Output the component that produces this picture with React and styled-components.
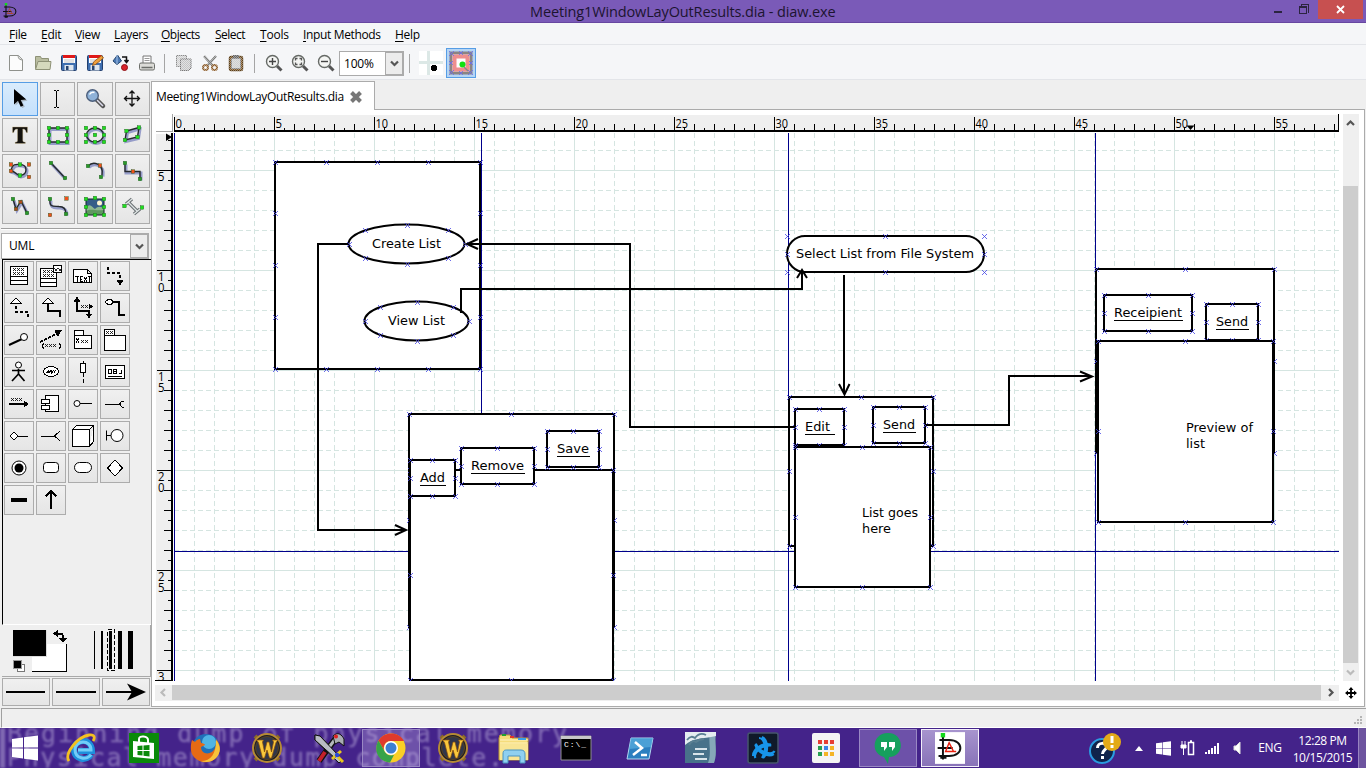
import React from "react";
import styled, { createGlobalStyle } from "styled-components";

const Global = createGlobalStyle`
  * { box-sizing: border-box; }
  body { margin: 0; background: #efefef; }
  svg { display: block; flex: none; }
`;

const ui = `"Open Sans", "Noto Sans", sans-serif`;

const Desktop = styled.div`
  width: 1366px;
  height: 768px;
  overflow: hidden;
  display: flex;
  flex-direction: column;
  background: #efefef;
  font: 12px/16px ${ui};
  color: #000;
`;

/* ---------- title bar ---------- */
const TitleBar = styled.header`
  height: 23px;
  flex: none;
  display: grid;
  grid-template-columns: 530px 306px 1fr;
  background: #7a5ab8;
  border-bottom: 1px solid #6747a1;
`;
const AppMark = styled.div`
  padding: 3px 0 0 2px;
`;
const Title = styled.div`
  font-size: 14.5px;
  line-height: 23px;
  white-space: nowrap;
  letter-spacing: ${(p) => p.$track || 0}px;
  color: #1c1430;
`;
const WindowControls = styled.div`
  display: flex;
  justify-content: flex-end;
  align-items: flex-start;
  padding-right: 3px;
`;
const CloseButton = styled.div`
  width: 45px;
  height: 19px;
  margin-left: 8px;
  display: grid;
  place-items: center;
  background: #c75050;
`;

/* ---------- menu and toolbar ---------- */
const MenuBar = styled.nav`
  height: 22px;
  flex: none;
  display: flex;
  gap: 14px;
  padding: 4px 0 0 9px;
  background: #f5f6f8;
  border-bottom: 1px solid #e3e5e9;
`;
const MenuItem = styled.span`
  width: ${(p) => p.$w}px;
  white-space: nowrap;
  letter-spacing: ${(p) => p.$track}px;
  &::first-letter { text-decoration: underline; text-underline-offset: 2px; }
  display: block;
`;
const ToolBar = styled.div`
  height: 35px;
  flex: none;
  display: flex;
  align-items: center;
  padding: 2px 0 0 6px;
  background: #f5f6f8;
  border-bottom: 1px solid #e3e5e9;
`;
const ToolSlot = styled.div`
  width: ${(p) => p.$w || 26}px;
  display: flex;
  justify-content: ${(p) => (p.$end ? "flex-end" : "center")};
`;
const Separator = styled.i`
  width: 1px;
  height: 19px;
  margin: 0 ${(p) => p.$r}px 0 ${(p) => p.$l}px;
  background: #a5a5a5;
`;
const Combo = styled.div`
  width: ${(p) => p.$w}px;
  height: ${(p) => p.$h}px;
  margin: ${(p) => p.$m || 0};
  display: grid;
  grid-template-columns: 1fr 18px;
  background: #fff;
  border: 1px solid #ababab;
  line-height: ${(p) => p.$h - 2}px;
  padding-left: ${(p) => p.$pad}px;
  letter-spacing: -0.2px;
`;
const ComboArrow = styled.span`
  display: grid;
  place-items: center;
  background: #ececec;
  border: 1px solid #ababab;
`;
const SnapButton = styled.div`
  width: 30px;
  height: 30px;
  margin-left: 3px;
  padding: 2px;
  background: #b5d5f5;
  border: 1px solid #569de5;
`;

/* ---------- body ---------- */
const Body = styled.div`
  height: 628px;
  flex: none;
  display: flex;
`;
const SidePanel = styled.aside`
  width: 151px;
  flex: none;
  display: flex;
  flex-direction: column;
`;
const ToolGrid = styled.div`
  display: grid;
  grid-template-columns: 36px 35px 36px 35px;
  grid-auto-rows: 34px;
  gap: 2px;
  padding: 2px 0 3px 2px;
`;
const ToolButton = styled.div`
  display: grid;
  place-items: center;
  border: 1px solid ${(p) => (p.$on ? "#569de5" : "#acacac")};
  background: ${(p) => (p.$on ? "linear-gradient(#daecfc, #c4e0fc)" : "linear-gradient(#f0f0f0, #e5e5e5)")};
`;
const Rule = styled.div`
  height: 2px;
  margin: ${(p) => p.$m || 0};
  background: #fff;
  border-top: 1px solid #a0a0a0;
`;
const SheetBox = styled.div`
  height: 366px;
  margin-left: 2px;
  border: solid #000;
  border-width: 1px 0 0 1px;
  border-bottom: 1px solid #fff;
  padding: 1px;
  display: grid;
  grid-template-columns: repeat(4, 30px);
  grid-auto-rows: 30px;
  gap: 2px;
`;
const ColorArea = styled.div`
  height: 52px;
  display: flex;
  border: solid #a9a9a9;
  border-width: 0 1px 1px 0;
  margin-left: 2px;
  padding: 4px 0 0 9px;
  gap: 24px;
`;
const LineButtons = styled.div`
  display: grid;
  grid-template-columns: repeat(3, 48px);
  grid-auto-rows: 28px;
  gap: 2px;
  padding: 1px 0 0 2px;
`;

const Notebook = styled.main`
  width: 1214px;
  flex: none;
  display: flex;
  flex-direction: column;
  padding-top: 1px;
`;
const Tab = styled.div`
  width: 224px;
  height: 29px;
  flex: none;
  position: relative;
  margin-bottom: -1px;
  display: flex;
  align-items: center;
  gap: 6px;
  padding: 2px 0 0 4px;
  background: #fff;
  border: 1px solid #ababab;
  border-bottom: 0;
`;
const TabName = styled.span`
  width: 187px;
  white-space: nowrap;
  letter-spacing: -0.33px;
`;
const Page = styled.div`
  height: 598px;
  display: grid;
  grid-template-columns: 19px 1165px 20px;
  grid-template-rows: 19px 548px 20px;
  padding: 4px 0 0 3px;
  background: #fff;
  border: 1px solid #ababab;
`;
const Vertical = styled.div`
  grid-column: 3;
  grid-row: 1 / span 2;
  width: 16px;
  margin-left: 4px;
  display: flex;
  flex-direction: column;
  align-items: flex-start;
  background: #efefef;
`;
const TrackGap = styled.div`
  height: 54px;
`;
const Horizontal = styled.div`
  grid-column: 1 / span 2;
  grid-row: 3;
  height: 16px;
  margin-top: 4px;
  display: flex;
  align-items: flex-start;
  background: #efefef;
`;
const Thumb = styled.div`
  width: ${(p) => p.$w}px;
  height: ${(p) => p.$h}px;
  background: #cdcdcd;
`;
const ScrollEnd = styled.span`
  width: ${(p) => p.$w || 15}px;
  height: ${(p) => p.$h || 15}px;
  display: grid;
  place-items: center;
`;
const NavCorner = styled.div`
  grid-column: 3;
  grid-row: 3;
  padding: 6px 0 0 6px;
`;
const StatusBar = styled.footer`
  height: 20px;
  flex: none;
  margin-left: 1px;
  display: flex;
  justify-content: flex-end;
  align-items: flex-end;
  padding: 0 4px 3px 0;
  border: solid #a0a0a0;
  border-width: 1px 0 0 1px;
  border-bottom: 1px solid #fff;
`;

/* ---------- taskbar ---------- */
const TaskBar = styled.div`
  position: relative;
  height: 40px;
  flex: none;
  display: flex;
  background: #44238a;
  overflow: hidden;
`;
const Wallpaper = styled.div`
  position: absolute;
  inset: 0;
  opacity: 0.42;
  filter: blur(0.8px);
`;
const TaskItem = styled.div`
  position: relative;
  width: ${(p) => p.$w || 62}px;
  height: 40px;
  display: grid;
  place-items: center;
`;
const TaskFrame = styled.div`
  width: 58px;
  height: 38px;
  display: grid;
  place-items: center;
  background: ${(p) => (p.$on ? "linear-gradient(#a794ce, #8873b8)" : "rgba(190,170,230,.34)")};
  border: 1px solid ${(p) => (p.$on ? "#f3effa" : "#9a88c4")};
`;
const Tray = styled.div`
  margin-left: auto;
  position: relative;
  display: flex;
  align-items: center;
  color: #fff;
`;
const TrayItem = styled.div`
  width: ${(p) => p.$w}px;
  display: flex;
  justify-content: center;
  white-space: nowrap;
  letter-spacing: -0.35px;
`;
const Clock = styled.div`
  width: 71px;
  text-align: center;
  white-space: nowrap;
  letter-spacing: -0.4px;
  line-height: 17px;
  padding-top: 1px;
`;
const ShowDesktop = styled.div`
  width: 8px;
  height: 40px;
  background: #6d549f;
  border-left: 1px solid #9885c0;
`;

const Svg = ({ w = 24, h = w, vb, crisp, children }) => (
  <svg width={w} height={h} viewBox={vb || `0 0 ${w} ${h}`} fill="none" shapeRendering={crisp ? "crispEdges" : undefined}>
    {children}
  </svg>
);

const Chevron = ({ dir = "down", c = "#555" }) => {
  const d = { down: "M2 3.5L5.5 7 9 3.5", up: "M2 7L5.5 3.5 9 7", left: "M7 2L3.5 5.5 7 9", right: "M4 2l3.5 3.5L4 9" }[dir];
  return <Svg w={11}><path d={d} stroke={c} strokeWidth="2.2" /></Svg>;
};

/* ---------- toolbar icons ---------- */
const Floppy = ({ pen }) => (
  <Svg w={18}>
    <rect x="1.5" y="1.5" width="15" height="15" rx="1" fill="#3f6fb0" stroke="#23406f" />
    <path d="M3 1h12v8H3z" fill="#fff" /><path d="M3 1h12v3H3z" fill="#e01818" />
    <path d="M4 6h10M4 8h10" stroke="#c5c5c5" />
    <path d="M4.500 11h9v5.500h-9z" fill="#dfe6ee" /><path d="M6 12h2.500v4H6z" fill="#27446f" />
    {pen && <path d="M6.500 11.500l1-3.500 8-6.500 2 2.500-8 6.500z" fill="#f0a03c" stroke="#8a4e12" strokeWidth=".8" />}
  </Svg>
);
const Magnifier = ({ kind }) => (
  <Svg w={18}>
    <path d="M12 12l4.500 4.500" stroke="#555" strokeWidth="3" />
    <circle cx="7.500" cy="7.500" r="6" fill="#f4f5f3" stroke="#666a66" strokeWidth="1.400" />
    {kind === "fit" ? <path d="M4.500 6.500v-2h2M8.500 4.500h2v2M10.500 8.500v2h-2M6.500 10.500h-2v-2" stroke="#555" strokeWidth="1.300" /> : <path d={kind === "in" ? "M4 7.500h7M7.500 4v7" : "M4 7.500h7"} stroke="#444" strokeWidth="1.400" />}
  </Svg>
);
const FileIcons = [
  <Svg w={18}><path d="M2.500 1.500h9l4 4v11h-13z" fill="#fcfcfc" stroke="#8f918c" /><path d="M11 1.500c.5 2 0 4 4.500 4.500" stroke="#8f918c" fill="#e4e4e4" /></Svg>,
  <Svg w={18}><path d="M1.500 14.500v-12h5l1 2h7v10z" fill="#b9bda0" stroke="#8d9176" /><path d="M1.500 15.500l2.500-8h13l-1 8z" fill="#d5d9bd" stroke="#8d9176" /></Svg>,
  <Floppy />,
  <Floppy pen />,
  <Svg w={18}><path d="M1 7l4.500-6 4 6-4.500 3.500z" fill="#4a78b4" stroke="#27486f" /><path d="M5 1v9" stroke="#a8c4e6" /><path d="M10 3h4.500v5M12.500 6l2 2.500 2-2.500" stroke="#111" strokeWidth="1.500" /><circle cx="12.500" cy="13.500" r="3" fill="#d8222a" stroke="#8f1015" /></Svg>,
  <Svg w={18}><path d="M5 9V2h8v7" fill="#fff" stroke="#777" /><path d="M6.500 4.500h5M6.500 6.500h5" stroke="#999" /><rect x="1.500" y="9" width="15" height="7" rx="1.500" fill="#dcdcd8" stroke="#6b6d69" /><path d="M3.500 13.500h11" stroke="#6b6d69" strokeWidth="1.500" /></Svg>,
];
const EditIcons = [
  <Svg w={18}><defs><pattern id="dim" width="2" height="2" patternUnits="userSpaceOnUse"><path d="M0 0h1v1H0zM1 1h1v1H1z" fill="#f5f6f8" /></pattern></defs><path d="M1.500 1.500h10v11h-10z" fill="#d0d0d0" stroke="#8a8a8a" /><path d="M5.500 5h10.500v9l-2.500 2.500h-8z" fill="#c4c4c4" stroke="#777" /><path d="M0 0h18v18H0z" fill="url(#dim)" opacity=".6" /></Svg>,
  <Svg w={18}><path d="M3 2l9 10M15 2L6 12" stroke="#7c7c7a" strokeWidth="2.500" /><circle cx="4.500" cy="13.500" r="2.500" stroke="#8f5f2c" strokeWidth="2" /><circle cx="13.500" cy="13.500" r="2.500" stroke="#8f5f2c" strokeWidth="2" /><path d="M0 0h18v18H0z" fill="url(#dim)" opacity=".45" /></Svg>,
  <Svg w={18}><rect x="2.500" y="2.500" width="13" height="14" rx="1.500" fill="#8a6230" stroke="#5d3f16" strokeWidth="1.500" /><path d="M4.500 4.500h9v10h-9z" fill="#cfcfcf" stroke="#888" /><path d="M6 1h6v3H6z" fill="#666" /><path d="M0 0h18v18H0z" fill="url(#dim)" opacity=".4" /></Svg>,
];

/* ---------- drawing tool icons ---------- */
const Handles = ({ pts, c = "#1ee01e" }) => pts.map(([x, y], i) => <rect key={i} x={x - 1.75} y={y - 1.75} width="3.500" height="3.500" fill={c} stroke="#245a24" strokeWidth=".4" />);
const Shape = ({ d }) => (
  <>
    <path d={d} stroke="#6a74b8" strokeWidth="3" opacity=".65" transform="translate(1 1.500)" style={{ filter: "blur(.7px)" }} />
    <path d={d} stroke="#25292d" strokeWidth="1.400" />
  </>
);
const box8 = [[3, 5], [12, 5], [21, 5], [3, 12], [21, 12], [3, 19], [12, 19], [21, 19]];
const R = "#f0501a";
const toolIcons = [
  <><path d="M6 2.500V17l4-3.500 2.700 6 2.600-1.200L12.700 13l5.300-.7z" fill="#888" opacity=".5" transform="translate(1.500 1.500)" /><path d="M6 2v15.500l4-3.700 2.700 6 2.600-1.300L12.700 13l5.600-.4z" fill="#000" /></>,
  <path d="M8 3.500h2M11 3.500h2M10.500 4v16M8 20.500h2M11 20.500h2" stroke="#000" />,
  <><path d="M14 13l6 6" stroke="#555" strokeWidth="4.500" strokeLinecap="round" /><path d="M14 13l6 6" stroke="#dde" strokeWidth="1.500" /><circle cx="9.500" cy="8.500" r="5.800" fill="#8fb2d8" stroke="#4c5f7c" strokeWidth="1.400" /><path d="M6.500 7.500c1-2 3-2.500 5-2" stroke="#fff" strokeWidth="1.500" /></>,
  <path d="M11 4.500v14M4 11.500h14M8.500 6.500L11 4l2.500 2.500M8.500 16.500L11 19l2.500-2.500M6 9l-2.500 2.500L6 14M16 9l2.500 2.500L16 14" stroke="#111" strokeWidth="1.300" />,
  <path d="M4.500 4h15v5.500h-1.300c-.5-2.500-1.200-3.500-3.400-3.500V17.500c0 1.200.8 1.600 2.500 1.600v1.400H7.200v-1.400c1.700 0 2.300-.4 2.300-1.600V6C7 6 6.300 7 5.800 9.500H4.500z" fill="#14120e" stroke="#c9b98c" strokeWidth=".4" />,
  <><Shape d="M3 5h18v14H3z" /><Handles pts={box8} /></>,
  <><Shape d="M3.500 12a8.500 7 0 1 0 17 0a8.500 7 0 1 0-17 0z" /><Handles pts={[...box8, [12, 12]]} /></>,
  <><Shape d="M5.500 8L18 4.500 16.500 14 4 17z" /><Handles pts={[[5.500, 8], [18, 4.500], [16.500, 14], [4, 17]]} /></>,
  <><Shape d="M3 12C4 5 8 5 12 5.500c8 0 8 10 0 11C8 16 8 12.500 3 12z" /><Handles pts={[[12, 5.500], [12, 16.500]]} /><Handles c={R} pts={[[3, 5.500], [21, 5.500], [3, 12], [21, 18]]} /></>,
  <><Shape d="M5 4l14 15" /><Handles c="#2a9a2a" pts={[[5, 4], [19, 19]]} /></>,
  <><Shape d="M5 7c5-5 16-3 14 9" /><Handles c="#2a9a2a" pts={[[5, 7], [18, 18]]} /><Handles c={R} pts={[[17, 6.500]]} /></>,
  <><Shape d="M4 4v8.500h15V20" /><Handles c="#2a9a2a" pts={[[4, 4], [19, 20]]} /><Handles c={R} pts={[[12, 12.500]]} /></>,
  <><Shape d="M5 4l3 10 5-8 6 12" /><Handles c="#2a9a2a" pts={[[5, 4], [19, 18]]} /><Handles c="#b04a1a" pts={[[8, 14], [12.500, 7]]} /></>,
  <><Shape d="M4 4c-1 9 4 7 9 7.500 5 0 7 3 7 7.500" /><Handles c="#2a9a2a" pts={[[4, 4], [20, 19]]} /><Handles c={R} pts={[[20.500, 3.500], [4, 20]]} /></>,
  <><path d="M3 4h18v16H3z" fill="#365e88" /><circle cx="16.500" cy="8" r="2.500" fill="#fff6cf" /><path d="M3 13c4-6 6-1 9 1 3-3 6-3 9 0v6H3z" fill="#8fb890" /><path d="M3 16c5-3 8 0 18-1v5H3z" fill="#5f9860" /><path d="M3 4h18v16H3z" stroke="#18222e" /><Handles pts={[[3, 4], [12, 3], [21, 4], [3, 12], [21, 12], [3, 20], [12, 20], [21, 20]]} /></>,
  <><path d="M7 7l9 9M5 9l6-5M13 19l6-5" stroke="#6c7275" strokeWidth="3.500" /><path d="M7 7l9 9M5 9l6-5M13 19l6-5" stroke="#e0e6e6" strokeWidth="1.300" /><Handles pts={[[3.500, 11], [21, 12.500]]} /></>,
];

/* ---------- UML sheet icons ---------- */
const Xs = ({ x, y, n = 3 }) => <path d={Array.from({ length: n }, (_, i) => `M${x + i * 4} ${y}l3 3M${x + i * 4 + 3} ${y}l-3 3`).join("")} stroke="#111" strokeWidth=".9" />;
const L = ({ d, w = 1, f = "none", dash }) => <path d={d} stroke="#000" strokeWidth={w} fill={f} strokeDasharray={dash} />;
const umlIcons = [
  <><L f="#fff" d="M2.500 1.500h17v18h-17zM2.500 11.500h17M2.500 15.500h17" /><Xs x={5} y={3} /><Xs x={5} y={7} /></>,
  <><L f="#fff" d="M.5 3.500h16v18H.5zM.5 13.500h16M.5 17.500h16" /><Xs x={3} y={5} /><Xs x={3} y={9} /><L f="#fff" d="M13.500.5h8v7h-8z" /><Xs x={14} y={2.500} n={2} /></>,
  <><L f="#fff" d="M1.500 4.500h14l4 4v9h-18zM15.500 4.500v4h4" /><L d="M3 11.500h4M5 12v5M8 17v-5.500h3M8 14.500h2M8 16.500h3M12 12l3 5M15 12l-3 5M16 11.500h4M17.500 12v5" /></>,
  <><L w={2} dash="3 2" d="M4 2v6h12v6" /><L f="#000" d="M13 15h6l-3 5z" /></>,
  <><L w={2} dash="3 2" d="M8 9v6h12v6" /><L f="#fff" d="M2.500 6.500h11L8 1z" /></>,
  <><L w={2} d="M8 7v7h12v6" /><L f="#fff" d="M2.500 6.500h11L8 1z" /></>,
  <><L w={2} d="M5 3v11h12v5M5 14h12" /><L f="#000" d="M2.500 4h5L5 .5zM14.500 17.500h5l-2.500 3z" /><Xs x={9} y={8} n={2} /><L f="#000" d="M17 7v5l3-2.500z" /></>,
  <><L w={2} d="M8 5h7v13h6" /><L f="#fff" d="M1 5l3-2.500h3L9.500 5 7 7.500H4z" /></>,
  <><L w={2} d="M1 16l13-6" /><circle cx="16" cy="8" r="3.500" fill="#fff" stroke="#000" /></>,
  <><L w={1.500} dash="3 1.500" d="M0 13L18 4" /><L f="#000" d="M15 2l6-.5-3 5z" /><L d="M4 14l-2 3 2 3M19 14l2 3-2 3" /><Xs x={5} y={15} /></>,
  <><L f="#fff" d="M2.500 6.500h17v13h-17zM2.500 1.500h9v5h-9z" /><L d="M4 9l3 5M7 9l-3 5" /><Xs x={9} y={11} n={2} /></>,
  <><L f="#fff" d="M.5 6.500h21v15H.5zM.5.500h10v6H.5z" /><Xs x={2} y={2} n={2} /></>,
  <><circle cx="10.500" cy="4" r="3" fill="#fff" stroke="#000" /><L w={1.700} d="M4 9.500h13M10.500 8v5L4 20M10.500 13l6 7" /></>,
  <><ellipse cx="11" cy="10.500" rx="7.500" ry="5" fill="#fff" stroke="#000" /><path d="M6.500 12l2-2.500.5 2.500 2-3 .5 3 2.500-3M14 12l1.500-3" stroke="#000" /></>,
  <><L f="#fff" d="M8.500 2.500h5v9h-5z" /><L d="M11 0v2" /><L dash="4 2" d="M11 12v10" /></>,
  <><L f="#fff" d="M1.500 4.500h19v13h-19z" /><L d="M4.500 8.500h3v4h-3zM9.500 12.500v-4h3v4zM9.500 10.500h3M15 12.500h2.500v-4M4 15.500h14" /></>,
  <><Xs x={3} y={5} /><L w={2} d="M1 11h16" /><L f="#000" d="M16 8.500l4 2.500-4 3z" /></>,
  <><L f="#fff" d="M5.500 2.500h13v16h-13z" /><L f="#fff" d="M1.500 6.500h8v4h-8zM1.500 12.500h8v4h-8z" /></>,
  <><circle cx="5" cy="10.500" r="3" fill="#fff" stroke="#000" /><L d="M8 10.500h12" /></>,
  <><L d="M1 11h14M20 8h-2l-2.500 3 2.500 3h2" /></>,
  <><L f="#fff" d="M2 11l4-4 4 4-4 4z" /><L d="M10 11h10" /></>,
  <><L d="M1 11h13M20 6l-5.500 5 5.500 5" /></>,
  <><L f="#fff" d="M.5 4.500h17v17H.5zM.5 4.500l4-4h17l-4 4M21.500.500v16l-4 5" /></>,
  <><circle cx="13" cy="10.500" r="6" fill="#fff" stroke="#000" /><L d="M2.500 5.500v10M3 10.500h4" /></>,
  <><circle cx="11" cy="11" r="7" fill="#fff" stroke="#000" /><circle cx="11" cy="11" r="4.500" fill="#000" /></>,
  <rect x="3.500" y="5.500" width="15" height="10" rx="3" fill="#fff" stroke="#000" />,
  <rect x="2.500" y="5.500" width="17" height="10" rx="5" fill="#fff" stroke="#000" />,
  <L f="#fff" d="M11 3l7.500 8-7.500 8-7.500-8z" />,
  <L w={4} d="M3 11h16" />,
  <L w={1.500} d="M11 20V2M5.500 7.500L11 2l5.500 5.500" />,
];

/* ---------- rulers ---------- */
const HRuler = () => {
  const ticks = [];
  for (let i = 0; i <= 116; i++) {
    const h = i % 10 === 0 ? 14 : i % 2 === 0 ? 7 : 3;
    ticks.push(<path key={i} d={`M${174.5 + i * 10} 131v-${h}`} stroke="#000" />);
  }
  return (
    <svg width="1165" height="19" viewBox="174 114 1165 19" fontFamily={ui} fontSize="12">
      <path d="M174 115h1165v16H174z" fill="#efefef" />
      {ticks}
      <path d="M174 131h1165" stroke="#000" strokeWidth="2" />
      <path d="M1338.500 114v18" stroke="#000" />
      {Array.from({ length: 12 }, (_, i) => (
        <text key={i} x={175.5 + i * 100} y="128" textLength={i < 2 ? 6.5 : 12.5} lengthAdjust="spacingAndGlyphs">{i * 5}</text>
      ))}
      <path d="M1186.500 125.500h8L1190.500 130z" fill="#000" />
    </svg>
  );
};
const VRuler = () => {
  const ticks = [];
  for (let y = 140; y < 681; y += 10) {
    const w = (y - 170) % 100 === 0 ? 15 : (y - 170) % 20 === 0 ? 8 : 4;
    ticks.push(<path key={y} d={`M172 ${y + 0.5}h-${w}`} stroke="#000" />);
  }
  const labels = ["5", "10", "15", "20", "25", "3"];
  return (
    <svg width="19" height="548" viewBox="155 133 19 548" fontFamily={ui} fontSize="12">
      <path d="M156 134h16v547h-16z" fill="#efefef" />
      {ticks}
      <path d="M172 133v548" stroke="#000" strokeWidth="2" />
      <path d="M155 680.500h18" stroke="#000" />
      {labels.map((l, i) => [...l].map((ch, k) => (
        <text key={`${i}-${k}`} x="158" y={181 + i * 100 + k * 11} textLength="6.500" lengthAdjust="spacingAndGlyphs">{ch}</text>
      )))}
      <path d="M166 133.500l6 3.500-6 4z" fill="#000" />
    </svg>
  );
};

/* ---------- diagram ---------- */
const Mark = ({ x, y }) => <path d={`M${x - 2} ${y - 2}l5 5M${x + 3} ${y - 2}l-5 5`} stroke="#4545e6" strokeWidth=".8" />;
const Node = ({ x1, y1, x2, y2, n = 2, r = 0 }) => {
  const marks = [];
  for (let i = 0; i <= n; i++)
    for (let j = 0; j <= n; j++)
      if (i === 0 || j === 0 || i === n || j === n) marks.push([Math.floor(x1 + ((x2 - x1) * i) / n), Math.floor(y1 + ((y2 - y1) * j) / n)]);
  return (
    <>
      <rect x={x1} y={y1} width={x2 - x1} height={y2 - y1} rx={r} fill="#fff" stroke="#000" strokeWidth="2" shapeRendering={r ? undefined : "crispEdges"} />
      {marks.map(([x, y], i) => <Mark key={i} x={x} y={y} />)}
    </>
  );
};
const Oval = ({ cx, cy, rx, ry }) => (
  <>
    <ellipse cx={cx} cy={cy} rx={rx} ry={ry} fill="#fff" stroke="#000" strokeWidth="2" />
    {Array.from({ length: 8 }, (_, i) => (
      <Mark key={i} x={Math.round(cx + rx * Math.cos((i * Math.PI) / 4))} y={Math.round(cy + ry * Math.sin((i * Math.PI) / 4))} />
    ))}
  </>
);
const Caption = ({ x, y, w, u, children }) => (
  <>
    <text x={x} y={y} textLength={w} lengthAdjust="spacingAndGlyphs">{children}</text>
    {u && <path d={`M${x} ${y + 3.5}h${u}`} stroke="#000" shapeRendering="crispEdges" />}
  </>
);
const Wire = ({ d }) => <path d={d} stroke="#000" strokeWidth="2" shapeRendering="crispEdges" />;
const Head = ({ d }) => <path d={d} stroke="#000" strokeWidth="2" />;

const Canvas = () => {
  const grid = [];
  for (let x = 194; x < 1339; x += 20) grid.push(<path key={`v${x}`} d={`M${x + 0.5} 133v548`} strokeDasharray={(x - 174) % 100 ? "5 3" : undefined} />);
  for (let y = 150; y < 681; y += 20) grid.push(<path key={`h${y}`} d={`M174 ${y + 0.5}h1165`} strokeDasharray={(y - 170) % 100 ? "5 3" : undefined} />);
  return (
    <svg width="1165" height="548" viewBox="174 133 1165 548" fill="none">
      <path d="M174 133h1165v548H174z" fill="#fff" />
      <g stroke="#d5e5e1" shapeRendering="crispEdges">{grid}</g>
      <path d="M174.500 133v548M481.500 133v548M788.500 133v548M1095.500 133v548M174 551.500h1165" stroke="#00008b" shapeRendering="crispEdges" />
      <Node x1={275} y1={162} x2={480} y2={369} n={4} />
      <Oval cx={406.5} cy={244} rx={58} ry={19.5} />
      <Oval cx={416.5} cy={321} rx={52} ry={19.5} />
      <Node x1={409} y1={414} x2={614} y2={627} />
      <Node x1={410} y1={470} x2={613} y2={680} />
      <Node x1={410} y1={460} x2={455} y2={496} />
      <Node x1={461} y1={448} x2={534} y2={484} />
      <Node x1={547} y1={431} x2={599} y2={467} />
      <Node x1={787} y1={236} x2={984} y2={272} r={18} />
      <Node x1={789} y1={397} x2={933} y2={546} />
      <Node x1={795} y1={409} x2={844} y2={445} />
      <Node x1={873} y1={407} x2={925} y2={443} />
      <Node x1={795} y1={447} x2={930} y2={587} />
      <Node x1={1096} y1={269} x2={1274} y2={453} />
      <Node x1={1104} y1={295} x2={1192} y2={331} />
      <Node x1={1206} y1={304} x2={1258} y2={340} />
      <Node x1={1098} y1={341} x2={1273} y2={522} />
      <Wire d="M348 244H318V530H406" />
      <Wire d="M795 427H630V244H468" />
      <Wire d="M461 313V289H802V272" />
      <Wire d="M844 275V394" />
      <Wire d="M926 425H1009V376H1091" />
      <Head d="M395 525l11 5-11 5" />
      <Head d="M478 239l-11 5 11 5" />
      <Head d="M797 278l5-8 5 8" />
      <Head d="M839 384l5.500 10.500 5-10.500" />
      <Head d="M1080 371.500l12 5-12 5" />
      <g fill="#000" fontFamily='"DejaVu Sans", sans-serif' fontSize="13">
        <Caption x={372} y={248} w={69}>Create List</Caption>
        <Caption x={388} y={325} w={57}>View List</Caption>
        <Caption x={796} y={258} w={178}>Select List from File System</Caption>
        <Caption x={420} y={482} w={25} u={26}>Add</Caption>
        <Caption x={471} y={470} w={53} u={54}>Remove</Caption>
        <Caption x={557} y={453} w={32} u={33}>Save</Caption>
        <Caption x={805} y={431} w={25} u={30}>Edit</Caption>
        <Caption x={883} y={429} w={32} u={33}>Send</Caption>
        <Caption x={862} y={517} w={56}>List goes</Caption>
        <Caption x={862} y={533} w={29}>here</Caption>
        <Caption x={1114} y={317} w={68} u={69}>Receipient</Caption>
        <Caption x={1216} y={326} w={32} u={33}>Send</Caption>
        <Caption x={1186} y={432} w={67}>Preview of</Caption>
        <Caption x={1186} y={448} w={19}>list</Caption>
      </g>
    </svg>
  );
};

/* ---------- taskbar icons ---------- */
const WinLogo = ({ w }) => <Svg w={w} vb="0 0 26 26"><path d="M0 4l11-1.500V12.500H0zM12 2.300L26 .500v12H12zM0 13.500h11V23.500L0 22zM12 13.500h14v12L12 23.700z" fill="#fff" /></Svg>;
const Warcraft = (
  <Svg w={32}><path d="M4 4l4 4M28 4l-4 4M4 28l4-4M28 28l-4-4" stroke="#8a6a26" strokeWidth="4" /><circle cx="16" cy="16" r="14" fill="#1c1d26" stroke="#b58a34" strokeWidth="2" /><circle cx="16" cy="16" r="11.500" fill="#30364a" stroke="#5a431c" /><path d="M5.500 8h7l-1 2 2 10 2.500-10h2l2.500 10 2-10-1-2h5.500l-2 2.500-4.500 15.500h-2L16 18l-2.500 8h-2L7.500 10.500z" fill="#f9c83c" stroke="#8a4d0c" strokeWidth=".7" /></Svg>
);
const taskIcons = [
  [50, <WinLogo w={26} />],
  [63, <Svg w={32}><path d="M25 22.500C22 29 8 29 8 17.500 8 7 26 5 26 19H12" stroke="#1d8fdc" strokeWidth="6" /><path d="M25 22.500C22 28 9 28 9 17.500 9 8 25 7 25 18H12" stroke="#72cdf8" strokeWidth="3" /><path d="M3 29C-2 22 11 5 23 3c6-1 6 3 4 6" stroke="#f4c020" strokeWidth="2.800" /></Svg>],
  [61, <Svg w={30}><path d="M0 0h30v30H0z" fill="#0a8a0a" /><path d="M4 8l21 2v16L4 24z" fill="#fff" /><path d="M10 9V6c0-4 9-3 9 1v3" stroke="#fff" strokeWidth="2" /><path d="M8.500 13l5-.5V17h-5zM14.500 12.500l6-.5v5h-6zM8.500 18h5v4.500l-5-.5zM14.500 18h6v5.500l-6-.7z" fill="#0a8a0a" /></Svg>],
  [62, <Svg w={32}><circle cx="17" cy="16" r="14" fill="#2070b8" /><circle cx="20" cy="10" r="7" fill="#4fb4e4" /><path d="M3 8l3 2c2-3 5-3 5-3l1 4c2 0 4 1 4 2l-4 2c0 6 6 8 11 5 4-3 5-8 4-13 6 7 4 14 0 19-8 8-20 4-24-4C1 17 2 11 3 8z" fill="#e66a14" /><path d="M27 8c6 7 4 14 0 18-4 4-10 5-15 3 10 0 15-7 15-21z" fill="#f7c33a" /></Svg>],
  [62, Warcraft],
  [61, <Svg w={32}><path d="M2 3l5 1 22 24-3 3L2 8z" fill="#b9bcc4" stroke="#111" /><path d="M23 6L6 29" stroke="#111" strokeWidth="6" /><path d="M23 6L14 18" stroke="#b5b9bd" strokeWidth="3" /><path d="M12 20L6 29" stroke="#c5202a" strokeWidth="4" /><path d="M2 3l5 1 18 19-3 3L2 8z" fill="#b9bcc4" stroke="#111" /><path d="M20 4c5-5 9-1 11 3v7l-5-4-4 2z" fill="#aaaeb2" stroke="#111" /><circle cx="23" cy="4.500" r="2" fill="#e02020" /><path d="M19 27l9-8M25 25l5 5" stroke="#e8c820" strokeWidth="3" /><circle cx="24" cy="23" r="2.200" fill="#2848d8" /></Svg>],
];
const Chrome = (
  <Svg w={32}><circle cx="16" cy="16" r="14.500" fill="#f9cf26" /><path d="M3.500 8.500C9-1 24-1 29 9H16a7 7 0 0 0-6 11z" fill="#df3a2d" /><path d="M3.500 8.500L10 20c2 3.500 6 4 9 3l-4 7.500C3 30-2 18 3.500 8.500z" fill="#37a349" /><circle cx="16" cy="16" r="7" fill="#fff" /><circle cx="16" cy="16" r="5.500" fill="#3c7fd2" /></Svg>
);
const taskIcons2 = [
  [60, Warcraft],
  [62, <Svg w={34}><path d="M2 7l1-3h10l2 3h16v22H2z" fill="#f5dc7a" stroke="#b8963a" /><path d="M3 9h28M3 12h28" stroke="#fff4c4" /><path d="M5 4h4" stroke="#20a030" strokeWidth="2" /><path d="M13 6h4" stroke="#e03828" strokeWidth="2" /><path d="M21 8h8" stroke="#3aa0e8" strokeWidth="2" /><path d="M3 13h28v16H3z" fill="#f8e594" /><path d="M6 32v-9c0-4 2-4 4-4h14c3 0 4 2 4 4v9h-5v-7H11v7z" fill="#8fd0f0" stroke="#4a94c0" /></Svg>],
  [61, <Svg w={32}><path d="M1 4h30v24H1z" fill="#000" stroke="#8f8f8f" /><path d="M1 4h30v3H1z" fill="#c8c8c8" /><text x="4" y="15" fill="#fff" fontSize="8" fontFamily="Liberation Mono, monospace" textLength="22">C:\_</text></Svg>],
  [65, <Svg w={30}><path d="M7 5h22l-4 21H3z" fill="#2b7fc0" stroke="#b0d8f0" /><path d="M7 5h22l-2 9-22 2z" fill="#5aaedf" opacity=".7" /><path d="M11 9l7 6-9 7M17 22h6" stroke="#fff" strokeWidth="2.500" /></Svg>],
  [59, <Svg w={34}><path d="M1 1h31c-2 10 2 20-2 31H1z" fill="#48728a" /><path d="M26 1h6c-2 10 2 20-2 31h-6c4-10 0-20 2-31z" fill="#86a8b8" /><path d="M1 1h31v4C18 8 9 7 1 14z" fill="#e4edf0" /><path d="M3 9c4-5 6-3 8-2 3-4 7-5 11-3M5 14c3-5 5-4 7-3 3-3 6-3 8-3" stroke="#597f92" strokeWidth="1.800" /><path d="M11 18h12M9 23h11M11 28h12" stroke="#d8e4ea" strokeWidth="2" /></Svg>],
  [65, <Svg w={32}><rect x="1" y="1" width="30" height="30" rx="2" fill="#101a2a" stroke="#45566c" strokeWidth="1.500" /><g stroke="#1795ea" strokeWidth="2.200"><path d="M12 6c5 0 9 11 3 20M15 5c6 3 7 15 1 21" /><path d="M12 6c5 0 9 11 3 20M15 5c6 3 7 15 1 21" transform="rotate(120 16 17)" /><path d="M12 6c5 0 9 11 3 20M15 5c6 3 7 15 1 21" transform="rotate(240 16 17)" /></g></Svg>],
  [62, <Svg w={30} h={32}><rect x="1" y="1" width="28" height="30" rx="2" fill="#f4f4f4" /><path d="M7 8h4v4H7zM13 8h4v4h-4zM19 8h4v4h-4z" fill="#e63e34" /><path d="M7 14h4v4H7z" fill="#28a052" /><path d="M13 14h4v4h-4z" fill="#3b82e8" /><path d="M19 14h4v4h-4zM19 20h4v4h-4zM13 20h4v4h-4z" fill="#f4b424" /><path d="M7 20h4v4H7z" fill="#28a052" /></Svg>],
];
const Hangouts = <Svg w={30} h={34}><path d="M15 2c17 0 17 24 1 24l-1 7-4-7C-3 23-1 2 15 2z" fill="#16a05d" /><path d="M8 11h6v5l-3 4v-4H8zM16 11h6v5l-3 4v-4h-3z" fill="#fff" /></Svg>;
const DiaLines = ({ tone = "#d42a1a" }) => (
  <><path d="M8 2v28M5 28h7M4 8h11c17 0 17 18 0 18H3M2 17h17" stroke="#111" strokeWidth="2.200" /><path d="M11 21l4-10 5 10zM11 21h12" stroke={tone} strokeWidth="1.600" /><path d="M5.500 0h5v5h-5z" fill="#14d81c" /></>
);

const menus = [["File", 18, -0.3], ["Edit", 20, -0.3], ["View", 25, -0.3], ["Layers", 33, -0.35], ["Objects", 40, -0.5], ["Select", 31, -0.5], ["Tools", 29, -0.2], ["Input Methods", 78, -0.35], ["Help", 25, -0.3]];

export default function App() {
  return (
    <Desktop>
      <Global />
      <TitleBar>
        <AppMark><Svg w={16} vb="0 0 32 32"><DiaLines tone="#a8452c" /></Svg></AppMark>
        <Title $track={-0.13}>Meeting1WindowLayOutResults.dia - diaw.exe</Title>
        <WindowControls>
          <Svg w={36} h={16} crisp>
            <path d="M0 12h8" stroke="#2b2440" strokeWidth="2" />
            <path d="M25.500 6.500h7v7h-7zM25 7h8M27.500 6V4.500h7v8" stroke="#2b2440" />
          </Svg>
          <CloseButton><Svg w={9}><path d="M1 1l7 7M8 1L1 8" stroke="#fff" strokeWidth="1.800" /></Svg></CloseButton>
        </WindowControls>
      </TitleBar>
      <MenuBar>{menus.map(([t, w, s]) => <MenuItem key={t} $w={w} $track={s}>{t}</MenuItem>)}</MenuBar>
      <ToolBar>
        <ToolSlot $w={20}>{FileIcons[0]}</ToolSlot>
        {FileIcons.slice(1).map((ic, i) => <ToolSlot key={i} $end>{ic}</ToolSlot>)}
        <Separator $l={8} $r={10} />
        <ToolSlot $w={18}>{EditIcons[0]}</ToolSlot>
        <ToolSlot $end>{EditIcons[1]}</ToolSlot>
        <ToolSlot $end>{EditIcons[2]}</ToolSlot>
        <Separator $l={9} $r={6} />
        {["in", "fit", "out"].map((k) => <ToolSlot key={k}><Magnifier kind={k} /></ToolSlot>)}
        <Combo $w={65} $h={25} $pad={4}>100%<ComboArrow><Chevron /></ComboArrow></Combo>
        <Separator $l={5} $r={9} />
        <Svg w={24} crisp><path d="M0 0h24v24H0z" fill="#fff" /><path d="M0 11h24M9 0v24" stroke="#dce8e6" strokeWidth="3" /><circle cx="15" cy="17" r="3" fill="#000" /></Svg>
        <SnapButton>
          <Svg w={24}><path d="M2 2h20v20H2z" fill="#fff" stroke="#8a8484" strokeWidth="3" /><path d="M5.500 5.500h13v13h-13z" stroke="#ee8e8e" strokeWidth="4" /><path d="M0 0l5 5M5 0L0 5M19 0l5 5M24 0l-5 5M0 19l5 5M5 19l-5 5M19 19l5 5M24 19l-5 5M10 0l4 4M14 0l-4 4M0 10l4 4M4 10l-4 4M20 10l4 4M24 10l-4 4M10 20l4 4M14 20l-4 4" stroke="#6a6af0" strokeWidth=".8" /><circle cx="13.500" cy="13.500" r="3" fill="#10e010" /><path d="M15 16l4 4" stroke="#888" strokeWidth="1.500" /></Svg>
        </SnapButton>
      </ToolBar>
      <Body>
        <SidePanel>
          <ToolGrid>{toolIcons.map((ic, i) => <ToolButton key={i} $on={i === 0}><Svg w={24}>{ic}</Svg></ToolButton>)}</ToolGrid>
          <Rule $m="1px 0 3px 1px" />
          <Combo $w={148} $h={26} $pad={7} $m="0 0 0 1px">UML<ComboArrow><Chevron /></ComboArrow></Combo>
          <SheetBox>{umlIcons.map((ic, i) => <ToolButton key={i}><Svg w={22} crisp={![8, 12, 18, 23, 24, 25, 26].includes(i)}>{ic}</Svg></ToolButton>)}</SheetBox>
          <ColorArea>
            <Svg w={58} h={44} crisp>
              <path d="M21 15h34v27H21z" fill="#fff" /><path d="M21 42h34V15" stroke="#000" />
              <path d="M2 1h34v26H2z" fill="#000" /><path d="M2 27h33V1" stroke="#dcdcdc" />
              <path d="M6.500 35.500h7v7h-7z" fill="#fff" stroke="#777" /><path d="M2 31h8v8H2z" fill="#000" stroke="#999" />
              <path d="M46 4.500h3c3 0 3.500 2 3.500 6" stroke="#000" strokeWidth="2" /><path d="M42 4.500l5-4v8zM48 9h8L52 13.500z" fill="#000" />
            </Svg>
            <Svg w={42} h={44} crisp><path d="M1.500 2v38" stroke="#000" /><path d="M9 2v38" stroke="#000" strokeWidth="2" /><path d="M17.500 2v38" stroke="#000" strokeWidth="3" /><path d="M27 2v38" stroke="#000" strokeWidth="4" /><path d="M37.500 2v38" stroke="#000" strokeWidth="5" /><path d="M14.500.5h7v41h-7z" stroke="#000" strokeDasharray="4 2" /></Svg>
          </ColorArea>
          <LineButtons>
            <ToolButton><Svg w={40} h={20} crisp><path d="M0 10h39" stroke="#000" strokeWidth="2" /></Svg></ToolButton>
            <ToolButton><Svg w={40} h={20} crisp><path d="M0 10h40" stroke="#000" strokeWidth="2" /></Svg></ToolButton>
            <ToolButton><Svg w={40} h={20}><path d="M0 10h30" stroke="#000" strokeWidth="2" /><path d="M21 1.500L40 10l-19 8.500 5-8.500z" fill="#000" /></Svg></ToolButton>
          </LineButtons>
        </SidePanel>
        <Notebook>
          <Tab><TabName>Meeting1WindowLayOutResults.dia</TabName><Svg w={14}><path d="M2.500 2.500l9 9M11.500 2.500l-9 9" stroke="#777" strokeWidth="4" /></Svg></Tab>
          <Page>
            <Svg w={19} crisp><path d="M17.500 0v17M1 17.500h17" stroke="#a5a5a5" /></Svg>
            <HRuler />
            <Vertical>
              <ScrollEnd $h={18}><Chevron dir="up" /></ScrollEnd>
              <TrackGap />
              <Thumb $w={15} $h={477} />
              <ScrollEnd $h={18}><Chevron dir="down" c="#bbb" /></ScrollEnd>
            </Vertical>
            <VRuler />
            <Canvas />
            <Horizontal>
              <ScrollEnd $w={17}><Chevron dir="left" c="#bbb" /></ScrollEnd>
              <Thumb $w={1149} $h={15} />
              <ScrollEnd $w={18}><Chevron dir="right" /></ScrollEnd>
            </Horizontal>
            <NavCorner><Svg w={12}><path d="M6 1v10M1 6h10" stroke="#000" strokeWidth="1.800" /><path d="M6 0l2.500 3h-5zM6 12l2.500-3h-5zM0 6l3-2.500v5zM12 6L9 3.500v5z" fill="#000" /></Svg></NavCorner>
          </Page>
        </Notebook>
      </Body>
      <StatusBar><Svg w={8} crisp><path d="M6 0h2v2H6zM6 3h2v2H6zM3 3h2v2H3zM0 6h2v2H0zM3 6h2v2H3zM6 6h2v2H6z" fill="#b5b5b5" /></Svg></StatusBar>
      <TaskBar>
        <Wallpaper>
          <svg width="600" height="40" fontFamily="DejaVu Sans Mono, monospace" fontSize="25" fill="#d2c8ea" stroke="#d2c8ea" strokeWidth=".4">
            <path d="M0 0h5v40H0z" />
            <text x="7" y="14" textLength="560">Beginning dump of physical memory</text>
            <text x="7" y="38" textLength="496">Physical memory dump complete.</text>
          </svg>
        </Wallpaper>
        {taskIcons.map(([w, ic], i) => <TaskItem key={i} $w={w}>{ic}</TaskItem>)}
        <TaskItem $w={64}><TaskFrame>{Chrome}</TaskFrame></TaskItem>
        {taskIcons2.map(([w, ic], i) => <TaskItem key={i} $w={w}>{ic}</TaskItem>)}
        <TaskItem $w={62}><TaskFrame>{Hangouts}</TaskFrame></TaskItem>
        <TaskItem $w={62}><TaskFrame $on><Svg w={30} h={32} vb="-1 0 34 34"><path d="M-1-1h34v36H-1z" fill="#fff" /><DiaLines tone="#e8200f" /></Svg></TaskFrame></TaskItem>
        <Tray>
          <TrayItem $w={36}><Svg w={34}><circle cx="14" cy="20" r="12" fill="#10234a" stroke="#2a9ce0" strokeWidth="2" /><path d="M9.500 17c0-6 9-6 9-1 0 3-4 3-4 7M14.500 25v3" stroke="#fff" strokeWidth="3" /><circle cx="24" cy="11" r="9" fill="#e3aa18" /><path d="M24 5v7M24 14v3" stroke="#fff" strokeWidth="3" /></Svg></TrayItem>
          <TrayItem $w={32}><Svg w={8} h={5}><path d="M4 0l4 5H0z" fill="#fff" /></Svg></TrayItem>
          <TrayItem $w={16}><WinLogo w={15} /></TrayItem>
          <TrayItem $w={34}><Svg w={16}><path d="M8.500 2.500h5v12h-5zM10 1h2" stroke="#fff" strokeWidth="1.500" /><path d="M2 1v4M5 1v4M1 5h5v3H1zM3.500 8v7" stroke="#fff" fill="#fff" /></Svg></TrayItem>
          <TrayItem $w={16}><Svg w={16} h={13} crisp><path d="M1 12v-2M4 12V8M7 12V6M10 12V4M13 12V1" stroke="#fff" strokeWidth="2" /></Svg></TrayItem>
          <TrayItem $w={32}><Svg w={9} h={14}><path d="M1 5h2l4-4v12L3 9H1z" fill="#fff" stroke="#ddd" /></Svg></TrayItem>
          <TrayItem $w={34}>ENG</TrayItem>
          <Clock>12:28 PM<br />10/15/2015</Clock>
          <ShowDesktop />
        </Tray>
      </TaskBar>
    </Desktop>
  );
}
